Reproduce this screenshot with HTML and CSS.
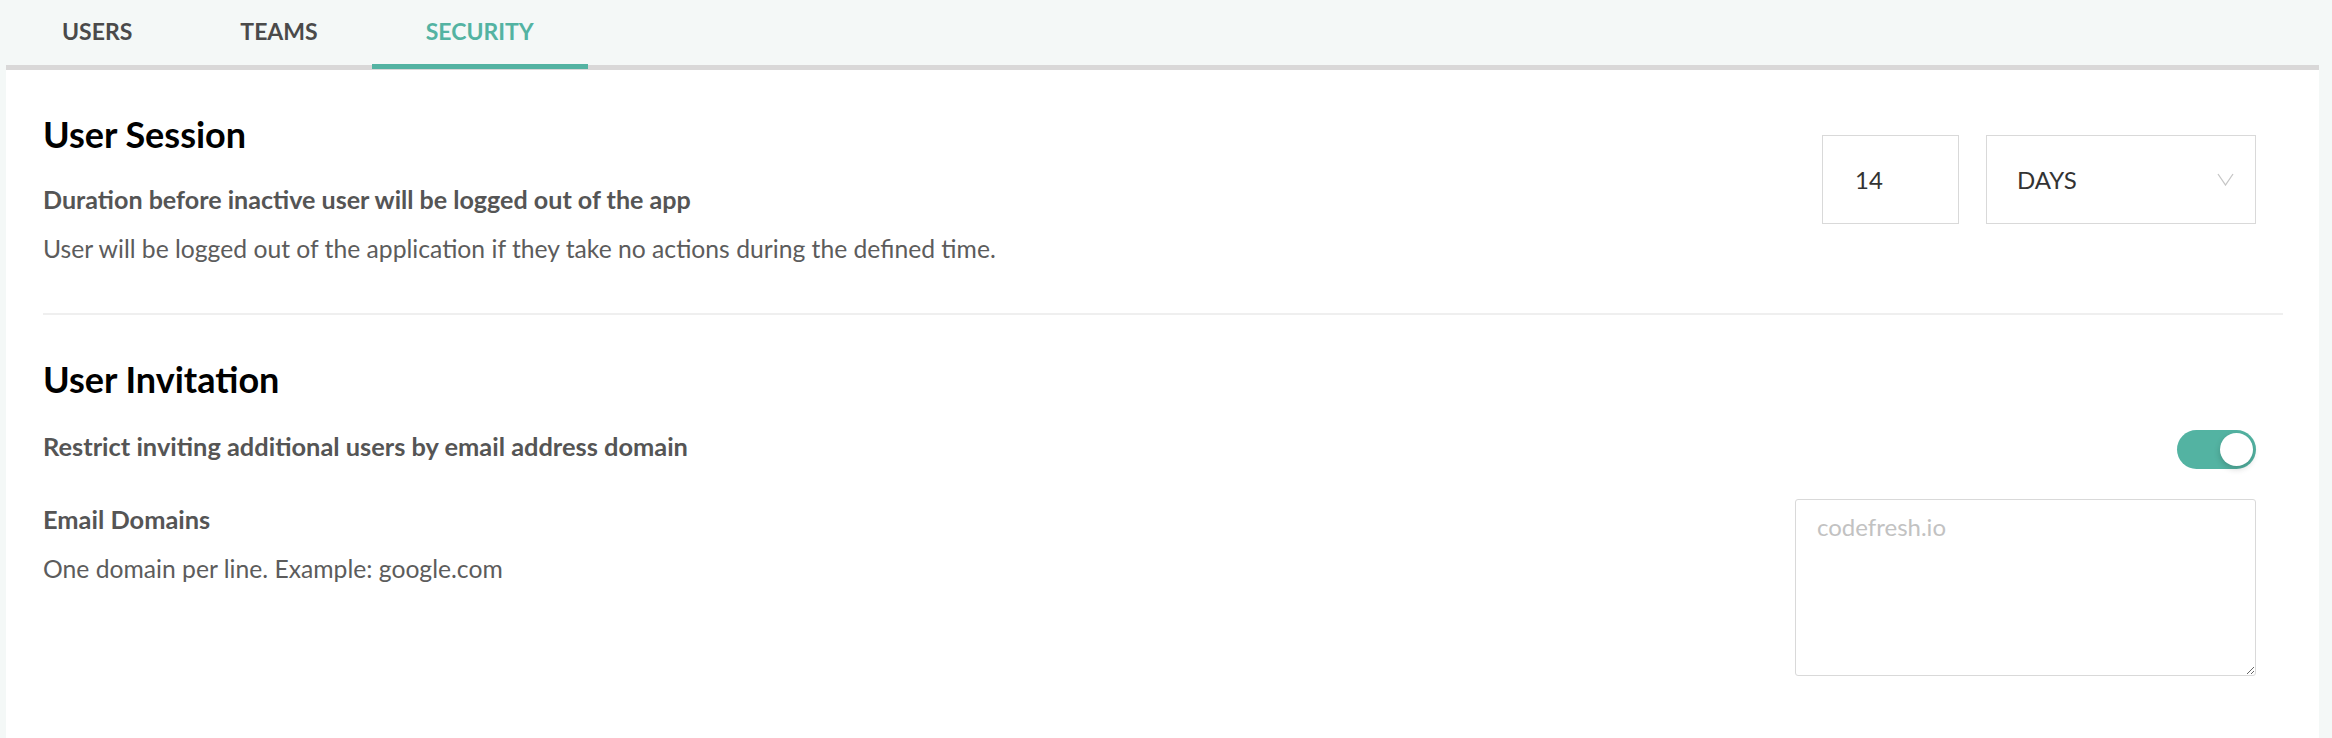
FILE: index.html
```html
<!DOCTYPE html>
<html lang="en">
<head>
<meta charset="utf-8">
<title>Security settings</title>
<link rel="stylesheet" href="styles.css">
</head>
<body>
<nav class="tabs">
  <div class="tab">USERS</div>
  <div class="tab">TEAMS</div>
  <div class="tab tab-active">SECURITY</div>
</nav>
<main class="panel">
  <section class="section section-first">
    <div class="row">
      <div class="texts">
        <h2 class="heading">User Session</h2>
        <div class="label label-session">Duration before inactive user will be logged out of the app</div>
        <div class="desc desc-session">User will be logged out of the application if they take no actions during the defined time.</div>
      </div>
      <div class="duration">
        <div class="num-input">14</div>
        <div class="select">
          <span>DAYS</span>
          <svg class="chev" width="17" height="13" viewBox="0 0 17 13"><path d="M1 1 L8.5 12 L16 1" fill="none" stroke="#c6c6c6" stroke-width="1.3"/></svg>
        </div>
      </div>
    </div>
  </section>
  <section class="section">
    <h2 class="heading">User Invitation</h2>
    <div class="row row-restrict">
      <div class="label">Restrict inviting additional users by email address domain</div>
      <div class="toggle"><div class="knob"></div></div>
    </div>
    <div class="row row-domains">
      <div class="texts texts-domains">
        <div class="label">Email Domains</div>
        <div class="desc desc-domains">One domain per line. Example: google.com</div>
      </div>
      <textarea class="domains" placeholder="codefresh.io"></textarea>
    </div>
  </section>
</main>
</body>
</html>
```
FILE: styles.css
```css
html, body {
  margin: 0;
  padding: 0;
  height: 100%;
}
body {
  background: #f4f8f7;
  font-family: Lato, "Open Sans", sans-serif;
  overflow: hidden;
}
.tabs {
  display: flex;
  padding-left: 8px;
  height: 65px;
}
.tab {
  position: relative;
  padding: 0 54px;
  font-size: 23px;
  font-weight: 700;
  line-height: 62px;
  color: #4a4a4a;
}
.tab-active {
  color: #53b3a2;
}
.tab-active::after {
  content: "";
  position: absolute;
  left: 0;
  right: 0;
  bottom: -4px;
  height: 5px;
  background: #53b3a2;
  z-index: 2;
}
.panel {
  position: relative;
  margin: 0 13px 0 6px;
  border-top: 5px solid #d9d8d8;
  background: #fff;
  height: calc(100% - 70px);
  padding: 0 36px 0 37px;
}
.section {
  padding-top: 42px;
}
.section-first {
  padding-bottom: 48px;
  border-bottom: 2px solid #efefef;
}
.row {
  display: flex;
  justify-content: space-between;
  padding-right: 27px;
}
.heading {
  margin: 0;
  font-size: 36px;
  font-weight: 700;
  line-height: 44px;
  color: #000;
}
.label {
  font-size: 25.4px;
  font-weight: 700;
  line-height: 32px;
  color: #555;
}
.desc {
  font-size: 24.7px;
  font-weight: 400;
  line-height: 32px;
  color: #5c5c5c;
}
.label-session {
  margin-top: 27px;
  font-size: 25.1px;
}
.desc-session {
  margin-top: 18px;
}
.duration {
  display: flex;
  gap: 27px;
  margin-top: 23px;
  align-self: flex-start;
}
.num-input {
  box-sizing: border-box;
  width: 137px;
  height: 89px;
  border: 1px solid #d9d9d9;
  padding-left: 32px;
  font-size: 24px;
  line-height: 87px;
  color: #333;
}
.select {
  box-sizing: border-box;
  width: 270px;
  height: 89px;
  border: 1px solid #d9d9d9;
  padding: 0 21px 0 30px;
  display: flex;
  align-items: center;
  justify-content: space-between;
  font-size: 24px;
  color: #333;
}
.chev {
  display: block;
}
.row-restrict {
  margin-top: 29px;
  align-items: flex-start;
}
.toggle {
  position: relative;
  box-sizing: border-box;
  width: 79px;
  height: 39px;
  border-radius: 20px;
  background: #53b3a2;
}
.knob {
  position: absolute;
  right: 3px;
  top: 3px;
  width: 33px;
  height: 33px;
  border-radius: 50%;
  background: #fff;
  box-shadow: 0 3px 6px rgba(0, 0, 0, 0.18);
}
.row-domains {
  margin-top: 30px;
  align-items: flex-start;
}
.texts-domains {
  padding-top: 4px;
}
.desc-domains {
  margin-top: 18px;
}
.domains {
  box-sizing: border-box;
  width: 461px;
  height: 177px;
  border: 1px solid #d9d9d9;
  border-radius: 3px;
  padding: 11px 21px;
  font-family: Lato, "Open Sans", sans-serif;
  font-size: 24px;
  line-height: 32px;
  color: #333;
  background: #fff;
  outline: none;
}
.domains::placeholder {
  color: #c2c2c2;
}
```
